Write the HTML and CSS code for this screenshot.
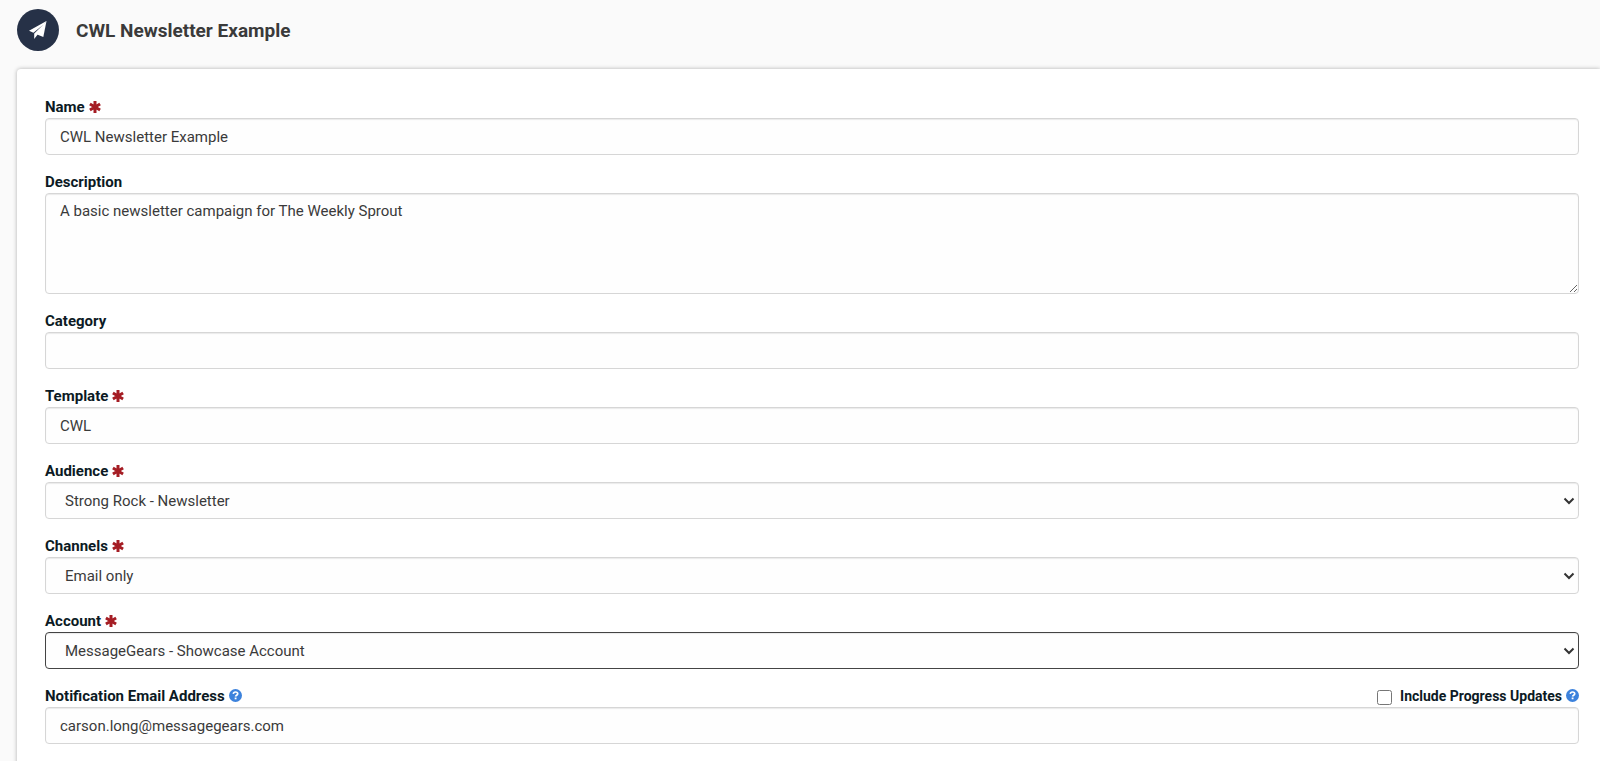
FILE: index.html
```html
<!DOCTYPE html>
<html lang="en">
<head>
    <meta charset="UTF-8">
    <meta name="viewport" content="width=device-width, initial-scale=1.0">
    <title>CWL Newsletter Example</title>
    <link rel="stylesheet" href="styles.css">
</head>
<body>
    <svg class="sprite" aria-hidden="true">
        <symbol id="icon-required" viewBox="0 0 12 12">
            <path d="M6 1.600v8.800M2.200 3.800l7.600 4.400M9.800 3.800L2.200 8.200" fill="none" stroke="currentColor" stroke-width="3" stroke-linecap="square"/>
        </symbol>
        <symbol id="icon-help" viewBox="0 0 14 14">
            <circle cx="7" cy="7" r="7" fill="currentColor"/>
            <path d="M4.600 5.200C4.800 3.700 5.800 3.200 7 3.200c1.400 0 2.400.7 2.400 1.900 0 1.600-2.300 1.600-2.300 3.100" fill="none" stroke="#fff" stroke-width="1.800"/>
            <path d="M6.100 9.200h2v1.900h-2z" fill="#fff"/>
        </symbol>
    </svg>

    <header class="page-header">
        <span class="campaign-icon">
            <svg viewBox="0 0 18 18" width="18" height="18" aria-hidden="true">
                <path fill="#fff" d="M17.500 0L0 9.700l4.400 2L14.300 3.800 5.200 12.400v5.600l2.900-3.700z"/>
                <path fill="#fff" d="M17.500 0L6.900 13l7.400 3.100z"/>
            </svg>
        </span>
        <h1>CWL Newsletter Example</h1>
    </header>

    <main class="card">
        <form class="campaign-form">
            <div class="field">
                <label for="name">Name <svg class="required"><use href="#icon-required"/></svg></label>
                <input type="text" id="name" name="name" value="CWL Newsletter Example" required>
            </div>

            <div class="field">
                <label for="description">Description</label>
                <textarea id="description" name="description">A basic newsletter campaign for The Weekly Sprout</textarea>
            </div>

            <div class="field">
                <label for="category">Category</label>
                <input type="text" id="category" name="category">
            </div>

            <div class="field">
                <label for="template">Template <svg class="required"><use href="#icon-required"/></svg></label>
                <input type="text" id="template" name="template" value="CWL" required>
            </div>

            <div class="field">
                <label for="audience">Audience <svg class="required"><use href="#icon-required"/></svg></label>
                <div class="select">
                    <select id="audience" name="audience" required>
                        <option>Strong Rock - Newsletter</option>
                    </select>
                    <svg class="chevron" viewBox="0 0 12 8" aria-hidden="true"><path d="M1.500 1.500L6 6l4.500-4.500"/></svg>
                </div>
            </div>

            <div class="field">
                <label for="channels">Channels <svg class="required"><use href="#icon-required"/></svg></label>
                <div class="select">
                    <select id="channels" name="channels" required>
                        <option>Email only</option>
                    </select>
                    <svg class="chevron" viewBox="0 0 12 8" aria-hidden="true"><path d="M1.500 1.500L6 6l4.500-4.500"/></svg>
                </div>
            </div>

            <div class="field">
                <label for="account">Account <svg class="required"><use href="#icon-required"/></svg></label>
                <div class="select">
                    <select id="account" class="active" name="account" required>
                        <option>MessageGears - Showcase Account</option>
                    </select>
                    <svg class="chevron" viewBox="0 0 12 8" aria-hidden="true"><path d="M1.500 1.500L6 6l4.500-4.500"/></svg>
                </div>
            </div>

            <div class="field">
                <div class="label-row">
                    <label for="email">Notification Email Address <svg class="help"><use href="#icon-help"/></svg></label>
                    <label class="progress-label" for="progress">
                        <input type="checkbox" id="progress" name="progress">
                        Include Progress Updates <svg class="help"><use href="#icon-help"/></svg>
                    </label>
                </div>
                <input type="email" id="email" name="email" value="carson.long@messagegears.com">
            </div>
        </form>
    </main>
</body>
</html>
```
FILE: styles.css
```css
* {
    box-sizing: border-box;
}
body {
    margin: 0;
    background: #fafafa;
    font-family: Roboto, Arial, sans-serif;
    font-size: 15px;
    color: #333;
    overflow: hidden;
}
.sprite {
    display: none;
}
.page-header {
    display: flex;
    align-items: center;
    gap: 17px;
    padding: 9px 17px 18px;
}
.campaign-icon {
    display: flex;
    align-items: center;
    justify-content: center;
    width: 42px;
    height: 42px;
    border-radius: 50%;
    background: #263147;
}
h1 {
    margin: 0;
    font-size: 19px;
    font-weight: 700;
    color: #3a3a3a;
}
.card {
    margin-left: 17px;
    padding: 28px 21px 40px 28px;
    background: #fff;
    border-radius: 4px 0 0 0;
    box-shadow: 0 0 4px rgba(0, 0, 0, 0.3);
}
.campaign-form {
    display: flex;
    flex-direction: column;
    gap: 17px;
}
.field {
    display: flex;
    flex-direction: column;
}
label {
    display: flex;
    align-items: center;
    gap: 4px;
    height: 21px;
    padding-bottom: 2px;
    font-size: 15px;
    font-weight: 700;
    color: #0c1a24;
}
.required {
    width: 12px;
    height: 12px;
    color: #a51d24;
}
.help {
    width: 13px;
    height: 13px;
    color: #3c82dc;
}
input[type="text"],
input[type="email"],
select,
textarea {
    width: 100%;
    height: 37px;
    padding: 0 14px;
    border: 1px solid #d6d6d6;
    border-radius: 4px;
    background: #fefefe;
    box-shadow: inset 0 1px 1px rgba(0, 0, 0, 0.08);
    font-family: inherit;
    font-size: 15px;
    color: #3a3a3a;
}
textarea {
    display: block;
    height: 101px;
    padding: 8px 14px;
    resize: vertical;
}
.select {
    position: relative;
}
select {
    display: block;
    padding: 0 19px;
    appearance: none;
}
select.active {
    border-color: #444;
}
.chevron {
    position: absolute;
    top: 15px;
    right: 4px;
    width: 12px;
    height: 8px;
    fill: none;
    stroke: #333;
    stroke-width: 2;
    pointer-events: none;
}
.label-row {
    display: flex;
    justify-content: space-between;
}
.progress-label {
    font-size: 14px;
}
.progress-label input {
    width: 15px;
    height: 15px;
    margin: 4px 4px 0 0;
}
```
